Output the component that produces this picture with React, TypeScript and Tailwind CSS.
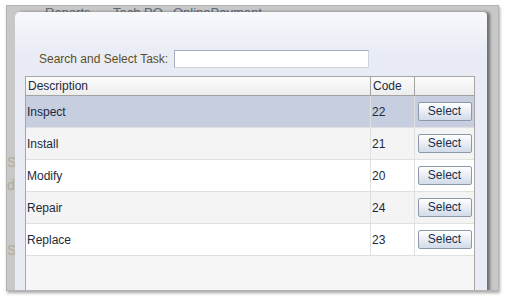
import React from 'react';

const tasks = [
  { name: 'Inspect', code: '22' },
  { name: 'Install', code: '21' },
  { name: 'Modify', code: '20' },
  { name: 'Repair', code: '24' },
  { name: 'Replace', code: '23' },
];

export default function App() {
  const selected = 0;

  return (
    <div className="w-[506px] h-[299px] bg-white pt-[5px] pl-[6px] pr-[7px] pb-[8px] font-['Liberation_Sans',Arial,sans-serif] text-[12px]">
      <div className="relative w-full h-full bg-[#c8c8c8] border border-[#b4b4b4] overflow-hidden shadow-[1px_2px_3px_rgba(0,0,0,0.35)]">
        {/* page behind the modal */}
        <div className="flex pl-[38px] -mt-[1px] text-[13px] leading-[16px] text-[#5e6a78]">
          <span className="w-[68px]">Reports</span>
          <span className="w-[60px]">Tech PO</span>
          <span>OnlinePayment</span>
        </div>
        <div className="absolute left-[0px] top-[145px] flex flex-col text-[14px] leading-[23px] text-[#b3ab9a]">
          <span>St</span>
          <span>d</span>
          <span className="mt-[42px]">S</span>
        </div>

        {/* modal dialog */}
        <div className="absolute left-[8px] top-[6px] w-[472px] h-[300px] rounded-tl-[5px] rounded-tr-[4px] bg-gradient-to-b from-[#f8f9fc] to-[#e9ecf5] to-[14%] shadow-[3px_0_3px_rgba(0,0,0,0.45)]">
          <div className="flex items-center pt-[38px] pl-[24px]">
            <label className="w-[135px] text-[#5f4e25]">Search and Select Task:</label>
            <input className="w-[195px] h-[18px] bg-white border border-[#a9b0bb] border-b-[#d0d5dd] border-r-[#d0d5dd] outline-none" />
          </div>

          <div className="mt-[8px] ml-[10px] w-[450px] h-[240px] bg-[#f6f6f6] border-t border-l border-r border-[#a6a6a6]">
            <div className="grid grid-cols-[344px_44px_60px] h-[19px] bg-gradient-to-b from-[#fcfcfc] to-[#ededed] border-b border-[#a3a3a3] text-[#1b2a3c]">
              <div className="pl-[2px] leading-[18px]">Description</div>
              <div className="pl-[2px] leading-[18px] border-l border-[#a3a3a3]">Code</div>
              <div className="border-l border-[#a3a3a3]" />
            </div>
            {tasks.map((t, i) => (
              <div
                key={t.code}
                className={`grid grid-cols-[344px_44px_60px] h-[32px] border-b border-[#e0e0e0] text-[#1b2a3c] ${
                  i === selected ? 'bg-[#c6cee0]' : i % 2 === 1 ? 'bg-[#f4f4f4]' : 'bg-white'
                }`}
              >
                <div className="flex items-center pl-[1px]">{t.name}</div>
                <div className="flex items-center pl-[1px] border-l border-[#e0e0e0]">{t.code}</div>
                <div className="flex items-center justify-center border-l border-[#e0e0e0]">
                  <button className="w-[54px] h-[19px] rounded-[2px] border border-[#8c99ad] bg-gradient-to-b from-white to-[#d3dbe9] text-[#1c2f4a] leading-[17px]">
                    Select
                  </button>
                </div>
              </div>
            ))}
          </div>
        </div>
      </div>
    </div>
  );
}
